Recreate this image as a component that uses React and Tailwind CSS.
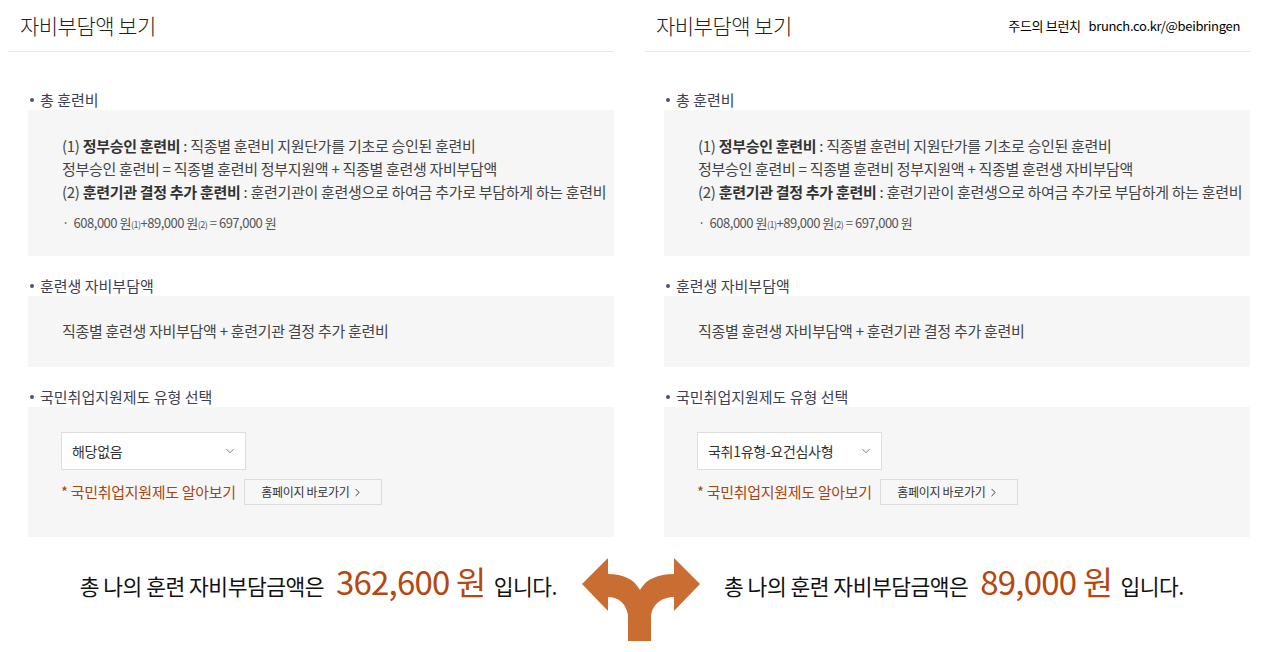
import { ChevronDown, ChevronRight } from 'lucide-react'

const FONT = { fontFamily: '"Noto Sans CJK KR", "Noto Sans", sans-serif' }

function Label({ children }) {
  return (
    <div className="flex items-center h-[20px] pl-[2px] text-[15px] text-[#3b4155]">
      <span className="w-[4px] h-[4px] rounded-full bg-[#4b5272] mr-[6px]" />
      {children}
    </div>
  )
}

function Panel({ selected, watermark }) {
  return (
    <div className="w-[606px] shrink-0">
      <div className="h-[52px] border-b border-[#e8e8e8] flex items-center justify-between pl-[12px] pr-[10px]">
        <h1 className="text-[21px] font-light text-[#222] tracking-tight">자비부담액 보기</h1>
        {watermark && (
          <span className="text-[13px] text-black tracking-tight">
            주드의 브런치&nbsp;&nbsp; brunch.co.kr/@beibringen
          </span>
        )}
      </div>

      <div className="ml-[20px]">
        <div className="mt-[38px]">
          <Label>총 훈련비</Label>
          <div className="bg-[#f6f6f6] h-[146px] pt-[24px] pl-[34px] text-[15px] leading-[23px] text-[#444] tracking-[-0.3px]">
            <p>
              (1) <b className="font-bold text-[#333]">정부승인 훈련비</b> : 직종별 훈련비 지원단가를 기초로 승인된 훈련비
            </p>
            <p>정부승인 훈련비 = 직종별 훈련비 정부지원액 + 직종별 훈련생 자비부담액</p>
            <p>
              (2) <b className="font-bold text-[#333]">훈련기관 결정 추가 훈련비</b> : 훈련기관이 훈련생으로 하여금 추가로 부담하게 하는 훈련비
            </p>
            <p className="mt-[8px] text-[13px] text-[#555] tracking-[-0.5px]">
              ·&nbsp; 608,000 원<span className="text-[9px]">(1)</span>+89,000 원<span className="text-[9px]">(2)</span> = 697,000 원
            </p>
          </div>
        </div>

        <div className="mt-[20px]">
          <Label>훈련생 자비부담액</Label>
          <div className="bg-[#f6f6f6] h-[71px] flex items-center pl-[34px] text-[15px] text-[#444] tracking-[-0.3px]">
            직종별 훈련생 자비부담액 + 훈련기관 결정 추가 훈련비
          </div>
        </div>

        <div className="mt-[20px]">
          <Label>국민취업지원제도 유형 선택</Label>
          <div className="bg-[#f6f6f6] h-[130px] pt-[25px] pl-[33px]">
            <div className="w-[185px] h-[38px] bg-white border border-[#dedede] flex items-center justify-between pl-[10px] pr-[8px] text-[14px] text-[#333] tracking-[-0.3px]">
              <span>{selected}</span>
              <ChevronDown size={14} strokeWidth={1.3} className="text-[#555]" />
            </div>
            <div className="mt-[9px] flex items-center">
              <span className="text-[15px] text-[#a84612] tracking-[-0.3px]">* 국민취업지원제도 알아보기</span>
              <div className="ml-[8px] w-[138px] h-[26px] bg-[#f7f7f7] border border-[#dcdcdc] flex items-center justify-center text-[12px] text-[#333] tracking-[-0.3px]">
                홈페이지 바로가기
                <ChevronRight size={13} strokeWidth={1.6} className="ml-[2px] text-[#222]" />
              </div>
            </div>
          </div>
        </div>
      </div>
    </div>
  )
}

function SplitArrow() {
  return (
    <svg width="120" height="85" viewBox="0 0 120 85" className="shrink-0">
      <path
        d="M1 27 L27 1 L27 17 C42 17 53 22 59 33 C65 22 77 17 93 17 L93 1 L119 27 L93 54 L93 40 C82 40 72 46 70 58 L70 84 L47 84 L47 58 C45 46 37 40 27 40 L27 54 Z"
        fill="#c96d32"
      />
    </svg>
  )
}

function Total({ amount }) {
  return (
    <div className="flex items-baseline text-[21.5px] text-[#111] tracking-[-0.5px] whitespace-nowrap">
      총 나의 훈련 자비부담금액은
      <span className="ml-[12px] mr-[8px] text-[33px] text-[#b5470f] tracking-[-0.8px]">{amount} 원</span>
      입니다.
    </div>
  )
}

export default function App() {
  return (
    <div className="w-[1280px] h-[652px] bg-white overflow-hidden" style={FONT}>
      <div className="flex gap-[30px] pl-[8px]">
        <Panel selected="해당없음" />
        <Panel selected="국취1유형-요건심사형" watermark />
      </div>

      <div className="flex mt-[20px]">
        <div className="w-[581px] flex justify-end pr-[24px]">
          <Total amount="362,600" />
        </div>
        <SplitArrow />
        <div className="pl-[23px]">
          <Total amount="89,000" />
        </div>
      </div>
    </div>
  )
}
